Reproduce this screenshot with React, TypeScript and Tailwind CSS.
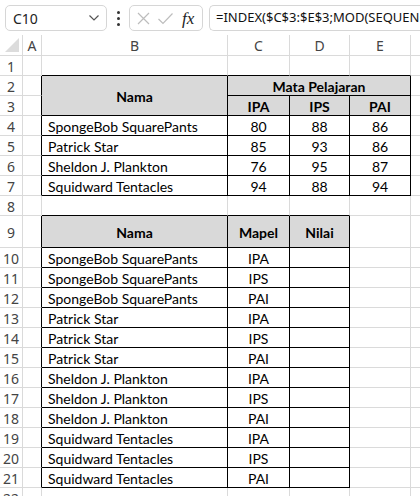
type Cell = {
  text?: string;
  bold?: boolean;
  fill?: boolean;
  center?: boolean;
  rowSpan?: number;
  colSpan?: number;
};

const LETTERS = ["", "A", "B", "C", "D", "E", "F"];
const NCOLS = 7;
const NROWS = 23;

const nilai = [
  ["SpongeBob SquarePants", "80", "88", "86"],
  ["Patrick Star", "85", "93", "86"],
  ["Sheldon J. Plankton", "76", "95", "87"],
  ["Squidward Tentacles", "94", "88", "94"],
];
const mapel = ["IPA", "IPS", "PAI"];

function buildCells() {
  const cells: Record<string, Cell> = {};
  cells["2,2"] = { text: "Nama", bold: true, fill: true, center: true, rowSpan: 2 };
  cells["2,3"] = { text: "Mata Pelajaran", bold: true, fill: true, center: true, colSpan: 3 };
  mapel.forEach((m, i) => {
    cells[`3,${3 + i}`] = { text: m, bold: true, fill: true, center: true };
  });
  nilai.forEach((row, i) => {
    cells[`${4 + i},2`] = { text: row[0] };
    for (let j = 1; j < 4; j++) cells[`${4 + i},${2 + j}`] = { text: row[j], center: true };
  });
  cells["9,2"] = { text: "Nama", bold: true, fill: true, center: true };
  cells["9,3"] = { text: "Mapel", bold: true, fill: true, center: true };
  cells["9,4"] = { text: "Nilai", bold: true, fill: true, center: true };
  nilai.forEach((row, i) => {
    mapel.forEach((m, k) => {
      const r = 10 + i * 3 + k;
      cells[`${r},2`] = { text: row[0] };
      cells[`${r},3`] = { text: m, center: true };
    });
  });
  return cells;
}

function inTable(r: number, c: number) {
  if (r >= 2 && r <= 7 && c >= 2 && c <= 5) return true;
  if (r >= 9 && r <= 21 && c >= 2 && c <= 4) return true;
  return false;
}

function Sheet() {
  const cells = buildCells();
  const covered = new Set<string>();
  Object.entries(cells).forEach(([k, v]) => {
    const [r, c] = k.split(",").map(Number);
    for (let i = 0; i < (v.rowSpan ?? 1); i++)
      for (let j = 0; j < (v.colSpan ?? 1); j++) if (i || j) covered.add(`${r + i},${c + j}`);
  });

  const out: JSX.Element[] = [];
  for (let r = 0; r < NROWS; r++) {
    for (let c = 0; c < NCOLS; c++) {
      const key = `${r},${c}`;
      if (covered.has(key)) continue;
      if (r === 0 && c === 0) {
        out.push(
          <div key={key} className="relative border-r border-b border-[#dadada]">
            <div className="absolute right-[3px] bottom-[3px] w-0 h-0 border-l-[14px] border-l-transparent border-b-[14px] border-b-[#dcdcdc]" />
          </div>
        );
        continue;
      }
      if (r === 0) {
        out.push(
          <div key={key} className="flex items-center justify-center pt-[1px] border-r border-b border-[#dadada] text-[14px] text-[#444] font-['Noto_Sans',sans-serif]">
            {LETTERS[c]}
          </div>
        );
        continue;
      }
      if (c === 0) {
        out.push(
          <div key={key} className="flex items-center justify-center pt-[1px] border-r border-b border-[#dadada] text-[14px] text-[#444] font-['Noto_Sans',sans-serif]">
            {r}
          </div>
        );
        continue;
      }
      const cell = cells[key] ?? {};
      const rEnd = r + (cell.rowSpan ?? 1) - 1;
      const cEnd = c + (cell.colSpan ?? 1) - 1;
      const blackR = inTable(r, cEnd) || inTable(r, cEnd + 1);
      const blackB = inTable(rEnd, c) || inTable(rEnd + 1, c);
      out.push(
        <div
          key={key}
          className={[
            "flex items-center pt-[1px] overflow-hidden whitespace-nowrap border-r border-b text-[14px] text-black font-['Lato',sans-serif]",
            blackR ? "border-r-black" : "border-r-[#dadada]",
            blackB ? "border-b-black" : "border-b-[#dadada]",
            cell.fill ? "bg-[#d9d9d9]" : "bg-white",
            cell.center ? "justify-center" : "pl-[6px]",
            cell.bold ? "font-bold" : "",
            cell.rowSpan === 2 ? "row-span-2" : "",
            cell.colSpan === 3 ? "col-span-3" : "",
          ].join(" ")}
        >
          {cell.text}
        </div>
      );
    }
  }
  return (
    <div className="grid grid-cols-[23px_19px_186px_62px_60px_61px_80px] grid-rows-[21px_repeat(8,20px)_32px_repeat(12,20px)_20px]">
      {out}
    </div>
  );
}

function FormulaBar() {
  return (
    <div className="flex items-center h-[35px] pt-[1px] gap-[6px] pl-[5px] bg-white font-['Noto_Sans',sans-serif]">
      <div className="flex items-center justify-between w-[102px] h-[26px] shrink-0 rounded-[5px] border border-[#d6d6d6] pl-[7px] pr-[6px] text-[14px] text-[#222]">
        <span>C10</span>
        <svg width="12" height="8" viewBox="0 0 12 8" fill="none" stroke="#555" strokeWidth="1.2">
          <path d="M1.5 1.5 L6 6 L10.5 1.5" />
        </svg>
      </div>
      <div className="flex flex-col gap-[3px] w-[10px] items-center shrink-0">
        <span className="w-[3px] h-[3px] rounded-full bg-[#333]" />
        <span className="w-[3px] h-[3px] rounded-full bg-[#333]" />
        <span className="w-[3px] h-[3px] rounded-full bg-[#333]" />
      </div>
      <div className="flex items-center w-[74px] h-[26px] shrink-0 rounded-[5px] border border-[#d6d6d6] pl-[6px] gap-[6px]">
        <svg width="15" height="15" viewBox="0 0 15 15" fill="none" stroke="#bdbdbd" strokeWidth="1.2">
          <path d="M2 2 L13 13 M13 2 L2 13" />
        </svg>
        <svg width="17" height="15" viewBox="0 0 17 15" fill="none" stroke="#bdbdbd" strokeWidth="1.2">
          <path d="M1.5 8 L6 12.5 L15.5 2.5" />
        </svg>
        <span className="text-[17px] italic text-[#222] font-['Liberation_Serif',serif] leading-none ml-[2px]">fx</span>
      </div>
      <div className="flex items-center flex-1 min-w-0 h-[26px] rounded-l-[5px] border border-r-0 border-[#d6d6d6] pl-[6px] overflow-hidden whitespace-nowrap text-[13px] text-[#111]">
        =INDEX($C$3:$E$3;MOD(SEQUENCE(12;1;0);3)+1)
      </div>
    </div>
  );
}

export default function App() {
  return (
    <div className="w-[420px] h-[496px] overflow-hidden bg-white">
      <FormulaBar />
      <Sheet />
    </div>
  );
}
